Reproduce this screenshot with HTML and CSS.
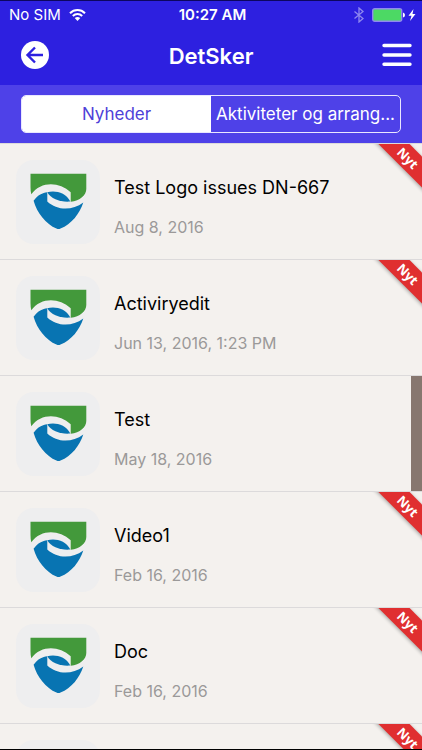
FILE: index.html
```html
<!DOCTYPE html>
<html lang="da">
<head>
<meta charset="utf-8">
<meta name="viewport" content="width=device-width, initial-scale=1">
<title>DetSker</title>
<link rel="stylesheet" href="styles.css">
</head>
<body>
<svg class="defs" aria-hidden="true">
  <symbol id="shield" viewBox="0 0 84 84">
    <path fill="#43993b" d="M14.5 13.7H70.3V29C70.3 35 64 41 54.7 41.7V32.3C43 21.5 25 21 15.3 34.3Q14.5 31 14.5 27z"/>
    <path fill="#0874b2" d="M17.6 40.7C22 35 26.5 32.8 31.3 32.3V41.5C41 50.5 56 51 67.3 42.5C63.500 54 55.500 64 44.5 68.6Q42.5 69.6 40.5 68.6C30 64 21 53 17.6 40.7z"/>
    <path fill="#0874b2" d="M31.3 32.3C38 30 50 32 54.3 41.6C45 42.5 35 39 31.3 32.3z"/>
  </symbol>
</svg>
<header class="top">
  <div class="status">
    <div class="carrier">
      <span>No SIM</span>
      <svg width="17" height="12" viewBox="0 0 17 12" fill="none" stroke="#fff" stroke-width="2"><path d="M1 4.2C5.2 0 11.8 0 16 4.2M3.8 7C6.5 4.4 10.5 4.4 13.2 7"/><path fill="#fff" stroke="none" d="M5.7 9Q8.5 6.8 11.3 9L8.5 12z"/></svg>
    </div>
    <span class="time">10:27 AM</span>
    <div class="power">
      <svg width="10" height="16" viewBox="0 0 10 16" fill="none" stroke="#8f88ef" stroke-width="1.3"><path d="M.5 4.5L9 11.5L5 15V1L9 4.5L.5 11.5"/></svg>
      <svg width="44" height="14" viewBox="0 0 44 14"><rect x=".7" y=".7" width="29" height="12.6" rx="2" fill="#4cd964" stroke="#8f88ef" stroke-width="1.4"/><path fill="#fff" d="M31 4.5Q33 5 33 7T31 9.5zM41.5 1L36.5 7.7H39.5L38 13L43.5 6H40.5z"/></svg>
    </div>
  </div>
  <div class="nav">
    <button class="icon-button" aria-label="Tilbage">
      <svg width="28" height="28" viewBox="0 0 28 28"><circle cx="14" cy="14" r="14" fill="#fff"/><path d="M22 14H7M14 6.5L6.5 14L14 21.5" fill="none" stroke="#2d20e0" stroke-width="2.4"/></svg>
    </button>
    <h1>DetSker</h1>
    <button class="icon-button menu" aria-label="Menu">
      <svg width="30" height="24" viewBox="0 0 30 24" stroke="#fff" stroke-width="3.4" stroke-linecap="round"><path d="M2 2.5H28M2 12H28M2 21.2H28"/></svg>
    </button>
  </div>
</header>
<div class="tabs">
  <div class="segments">
    <button class="segment active">Nyheder</button>
    <button class="segment">Aktiviteter og arrang...</button>
  </div>
</div>
<main class="list">
  <article class="row">
    <svg class="logo"><use href="#shield"/></svg>
    <div class="text"><h2>Test Logo issues DN-667</h2><time>Aug 8, 2016</time></div>
    <span class="ribbon">Nyt</span>
  </article>
  <article class="row">
    <svg class="logo"><use href="#shield"/></svg>
    <div class="text"><h2>Activiryedit</h2><time>Jun 13, 2016, 1:23 PM</time></div>
    <span class="ribbon">Nyt</span>
  </article>
  <article class="row">
    <svg class="logo"><use href="#shield"/></svg>
    <div class="text"><h2>Test</h2><time>May 18, 2016</time></div>
    <span class="marker"></span>
  </article>
  <article class="row">
    <svg class="logo"><use href="#shield"/></svg>
    <div class="text"><h2>Video1</h2><time>Feb 16, 2016</time></div>
    <span class="ribbon">Nyt</span>
  </article>
  <article class="row">
    <svg class="logo"><use href="#shield"/></svg>
    <div class="text"><h2>Doc</h2><time>Feb 16, 2016</time></div>
    <span class="ribbon">Nyt</span>
  </article>
  <article class="row">
    <svg class="logo"></svg>
    <span class="ribbon">Nyt</span>
  </article>
</main>
</body>
</html>
```
FILE: styles.css
```css
* { box-sizing: border-box; }
body {
  margin: 0;
  height: 100vh;
  display: flex;
  flex-direction: column;
  overflow: hidden;
  font-family: Inter, "Liberation Sans", sans-serif;
  background: #f4f1ee;
  border-bottom: 1px solid #000;
}
.defs { position: absolute; width: 0; height: 0; }
h1, h2 { margin: 0; }
button { font: inherit; cursor: pointer; }
svg { display: block; }

.top {
  flex: none;
  color: #fff;
  background: #2d20e0;
  border-top: 1px solid #0c0660;
}
.status {
  display: grid;
  grid-template-columns: 1fr auto 1fr;
  align-items: center;
  height: 28px;
  padding: 0 6px 0 9px;
  font-size: 15px;
  line-height: 20px;
}
.carrier, .power { display: flex; align-items: center; gap: 8px; }
.power { justify-content: flex-end; }
.time { font-weight: 600; }
.nav {
  display: grid;
  grid-template-columns: 1fr auto 1fr;
  align-items: center;
  height: 56px;
  padding: 0 10px 4px 10px;
}
.nav h1 { padding-top: 2px; font-size: 22px; line-height: 28px; font-weight: 600; }
.icon-button { justify-self: start; margin-left: 11px; padding: 0; border: 0; background: none; }
.menu { justify-self: end; margin-left: 0; }

.tabs { flex: none; padding: 10px 21px; background: #4e41e8; }
.segments {
  display: grid;
  grid-template-columns: 1fr 1fr;
  height: 38px;
  border: 1px solid #e9e7ff;
  border-radius: 5px;
  overflow: hidden;
}
.segment {
  padding: 0;
  border: 0;
  background: none;
  color: #fff;
  font-size: 17px;
  line-height: 20px;
  white-space: nowrap;
}
.segment.active { background: #fff; color: #4e41d8; }

.list { flex: 1; min-height: 0; overflow: hidden; }
.row {
  position: relative;
  display: flex;
  gap: 14px;
  height: 116px;
  padding: 16px;
  overflow: hidden;
  border-top: 1px solid #dcdadb;
}
.marker {
  position: absolute;
  top: 0;
  right: 0;
  bottom: 0;
  width: 11px;
  background: #87776f;
}
.logo {
  flex: none;
  width: 84px;
  height: 84px;
  border-radius: 18px;
  background: #eeeeef;
}
.text { padding-top: 16px; }
.text h2 { font-size: 18px; line-height: 24px; font-weight: 400; color: #000; }
.text time {
  display: block;
  margin-top: 17px;
  font-size: 16px;
  line-height: 20px;
  color: #9b9999;
}
.ribbon {
  position: absolute;
  top: 3px;
  right: -38px;
  width: 104px;
  height: 22px;
  transform: rotate(45deg);
  background: #e02f30;
  box-shadow: 0 1px 4px #0005;
  color: #fff;
  font: bold 13px/22px "Open Sans", sans-serif;
  text-align: center;
}
```
